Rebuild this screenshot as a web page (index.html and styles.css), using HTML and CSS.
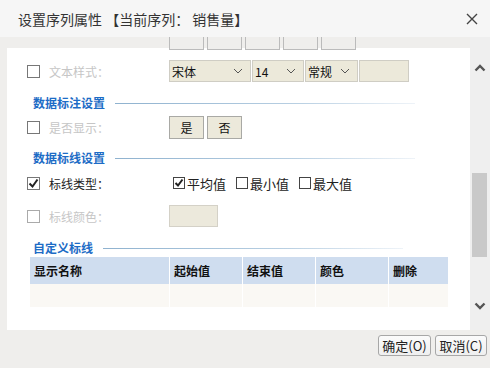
FILE: index.html
```html
<!DOCTYPE html>
<html lang="zh">

<head>
    <meta charset="utf-8">
    <title>设置序列属性</title>
    <link rel="stylesheet" href="styles.css">
</head>

<body>
    <div class="dialog">
        <header class="titlebar">
            <span class="title">设置序列属性 【当前序列： 销售量】</span>
            <svg class="close" width="12" height="12" viewBox="0 0 12 12">
                <path d="M1 1 L11 11 M11 1 L1 11" stroke="#444" stroke-width="1.4" fill="none" />
            </svg>
        </header>

        <div class="body">
            <div class="main">
                <div class="panel">
                    <!-- rester af knapper der er scrollet ud -->
                    <div class="stubs">
                        <span></span><span></span><span></span><span></span><span></span>
                    </div>

                    <div class="row row-style">
                        <span class="cb"></span>
                        <span class="label dim">文本样式：</span>
                        <div class="field selects">
                            <div class="select w82">宋体<svg class="arrow" width="10" height="6" viewBox="0 0 10 6"><polyline points="1,1 5,5 9,1" /></svg></div>
                            <div class="select w52">14<svg class="arrow" width="10" height="6" viewBox="0 0 10 6"><polyline points="1,1 5,5 9,1" /></svg></div>
                            <div class="select w53">常规<svg class="arrow" width="10" height="6" viewBox="0 0 10 6"><polyline points="1,1 5,5 9,1" /></svg></div>
                            <div class="select w50"></div>
                        </div>
                    </div>

                    <div class="section s1">
                        <span class="section-title">数据标注设置</span>
                        <span class="section-line"></span>
                    </div>

                    <div class="row row-show">
                        <span class="cb"></span>
                        <span class="label dim">是否显示：</span>
                        <div class="field">
                            <button class="toggle">是</button>
                            <button class="toggle">否</button>
                        </div>
                    </div>

                    <div class="section s2">
                        <span class="section-title">数据标线设置</span>
                        <span class="section-line"></span>
                    </div>

                    <div class="row row-type">
                        <span class="cb checked"><svg width="11" height="11" viewBox="0 0 11 11"><polyline points="1.5,5.5 4.5,8.5 9.5,1.5" /></svg></span>
                        <span class="label">标线类型：</span>
                        <div class="field options">
                            <label class="opt"><span class="cb small checked"><svg width="10" height="10" viewBox="0 0 10 10"><polyline points="1.5,5 4,7.5 8.5,1.5" /></svg></span>平均值</label>
                            <label class="opt"><span class="cb small"></span>最小值</label>
                            <label class="opt"><span class="cb small"></span>最大值</label>
                        </div>
                    </div>

                    <div class="row row-color">
                        <span class="cb light"></span>
                        <span class="label dim">标线颜色：</span>
                        <div class="field">
                            <div class="colorbox"></div>
                        </div>
                    </div>

                    <div class="section s3">
                        <span class="section-title">自定义标线</span>
                        <span class="section-line"></span>
                    </div>

                    <div class="table">
                        <div class="th">显示名称</div>
                        <div class="th">起始值</div>
                        <div class="th">结束值</div>
                        <div class="th">颜色</div>
                        <div class="th">删除</div>
                        <div class="td"></div>
                        <div class="td"></div>
                        <div class="td"></div>
                        <div class="td"></div>
                        <div class="td"></div>
                    </div>
                </div>
            </div>

            <div class="scrollbar">
                <svg class="sb-arrow up" width="12" height="8" viewBox="0 0 12 8"><polyline points="1.5,6.5 6,2 10.5,6.5" /></svg>
                <div class="thumb"></div>
                <svg class="sb-arrow down" width="12" height="8" viewBox="0 0 12 8"><polyline points="1.5,1.5 6,6 10.5,1.5" /></svg>
            </div>
        </div>

        <footer class="footer">
            <button class="btn ok">确定(O)</button>
            <button class="btn cancel">取消(C)</button>
        </footer>
    </div>
</body>

</html>
```

FILE: styles.css
```css
body {
    margin: 0;
    font-family: "Noto Sans CJK SC", "Noto Sans", sans-serif;
    font-size: 12px;
    color: #222;
    background-color: #efeeec;
}

.dialog {
    width: 490px;
    height: 368px;
    display: flex;
    flex-direction: column;
    background-color: #efeeec;
}

.titlebar {
    height: 37px;
    display: flex;
    align-items: center;
    justify-content: space-between;
    padding: 0 12px 0 18px;
    background-color: #f6f6f6;
    box-sizing: border-box;
}

.title {
    font-size: 14px;
    color: #333;
}

.body {
    display: flex;
    height: 293px;
}

.main {
    width: 463px;
    padding: 11px 0 0 7px;
}

.panel {
    height: 282px;
    background-color: white;
    overflow: hidden;
    position: relative;
    padding-top: 11px;
    margin-top: -11px;
    background-clip: content-box;
}

.stubs {
    display: flex;
    gap: 3px;
    margin-left: 162px;
    height: 13px;
    margin-top: -11px;
}

.stubs span {
    width: 33px;
    border: 1px solid #bbb;
    border-top: none;
    background-color: #efeeec;
}

.row {
    display: flex;
    align-items: center;
}

.cb {
    width: 11px;
    height: 11px;
    border: 1px solid #777;
    margin-left: 20px;
    background-color: white;
    display: flex;
    align-items: center;
    justify-content: center;
}

.cb.light {
    border-color: #aaa;
}

.cb svg polyline {
    fill: none;
    stroke: #222;
    stroke-width: 2;
}

.label {
    width: 120px;
    margin-left: 9px;
    font-size: 12px;
}

.dim {
    color: #c6c6c6;
}

.field {
    display: flex;
    gap: 2px;
}

.row-style {
    height: 22px;
    margin-top: 10px;
}

.selects {
    gap: 1px;
}

.select {
    height: 22px;
    box-sizing: border-box;
    border: 1px solid #cfcdc4;
    background-color: #ece9da;
    display: flex;
    align-items: center;
    justify-content: space-between;
    padding: 0 7px 0 2px;
    font-size: 12px;
    color: #111;
}

.w82 { width: 82px; }
.w52 { width: 52px; }
.w53 { width: 53px; }
.w50 { width: 50px; padding: 0; }

.arrow polyline {
    fill: none;
    stroke: #555;
    stroke-width: 1;
}

.section {
    display: flex;
    align-items: center;
    height: 16px;
    margin-left: 26px;
}

.section-title {
    color: #1d6cc6;
    font-weight: bold;
    font-size: 12px;
}

.section-line {
    width: 300px;
    height: 1px;
    margin-left: 10px;
    margin-top: 2px;
    background: linear-gradient(to right, #8fb2cf, #b8cfe2 60%, #eef3f8);
}

.s1 { margin-top: 12px; }
.s2 { margin-top: 10px; }
.s3 { margin-top: 12px; }

.row-show {
    height: 23px;
    margin-top: 6px;
}

.toggle {
    width: 35px;
    height: 23px;
    border: 1px solid #a9a9a5;
    background-color: #ece9db;
    font-family: "Noto Sans CJK SC", sans-serif;
    font-size: 12px;
    color: #111;
    padding: 0;
    margin-right: 1px;
}

.row-type {
    height: 16px;
    margin-top: 10px;
    color: #222;
}

.options {
    gap: 0;
    margin-left: 4px;
}

.opt {
    display: flex;
    align-items: center;
    font-size: 13px;
    color: #222;
    margin-right: 10px;
}

.cb.small {
    width: 12px;
    height: 12px;
    margin-left: 0;
    margin-right: 2px;
    border-color: #444;
    box-sizing: border-box;
}

.row-color {
    height: 22px;
    margin-top: 14px;
}

.colorbox {
    width: 47px;
    height: 20px;
    border: 1px solid #d4d1c7;
    background-color: #ece9dc;
}

.table {
    display: grid;
    grid-template-columns: 139px 72px 72px 72px 59px;
    grid-template-rows: 27px 23px;
    column-gap: 1px;
    width: 418px;
    margin: 2px 0 0 23px;
}

.th {
    background-color: #cfddef;
    font-weight: bold;
    font-size: 12px;
    color: #111;
    display: flex;
    align-items: center;
    padding-left: 4px;
}

.td {
    background-color: #faf8f4;
}

.scrollbar {
    width: 20px;
    display: flex;
    flex-direction: column;
    align-items: center;
    background-color: #efefef;
}

.sb-arrow polyline {
    fill: none;
    stroke: #555;
    stroke-width: 2.4;
}

.sb-arrow.up {
    margin-top: 27px;
}

.thumb {
    width: 15px;
    height: 84px;
    margin-top: 101px;
    margin-left: -2px;
    background-color: #c9c9c9;
}

.sb-arrow.down {
    margin-top: 45px;
}

.footer {
    flex: 1;
    display: flex;
    justify-content: flex-end;
    align-items: flex-start;
    gap: 4px;
    padding: 5px 3px 0 0;
}

.btn {
    height: 21px;
    padding: 0;
    border: 1px solid #a7a7a7;
    border-radius: 3px;
    background: linear-gradient(#fbfbfb, #efefef);
    font-family: "Noto Sans CJK SC", sans-serif;
    font-size: 13px;
    color: #222;
}

.ok {
    width: 53px;
}

.cancel {
    width: 52px;
}
```
